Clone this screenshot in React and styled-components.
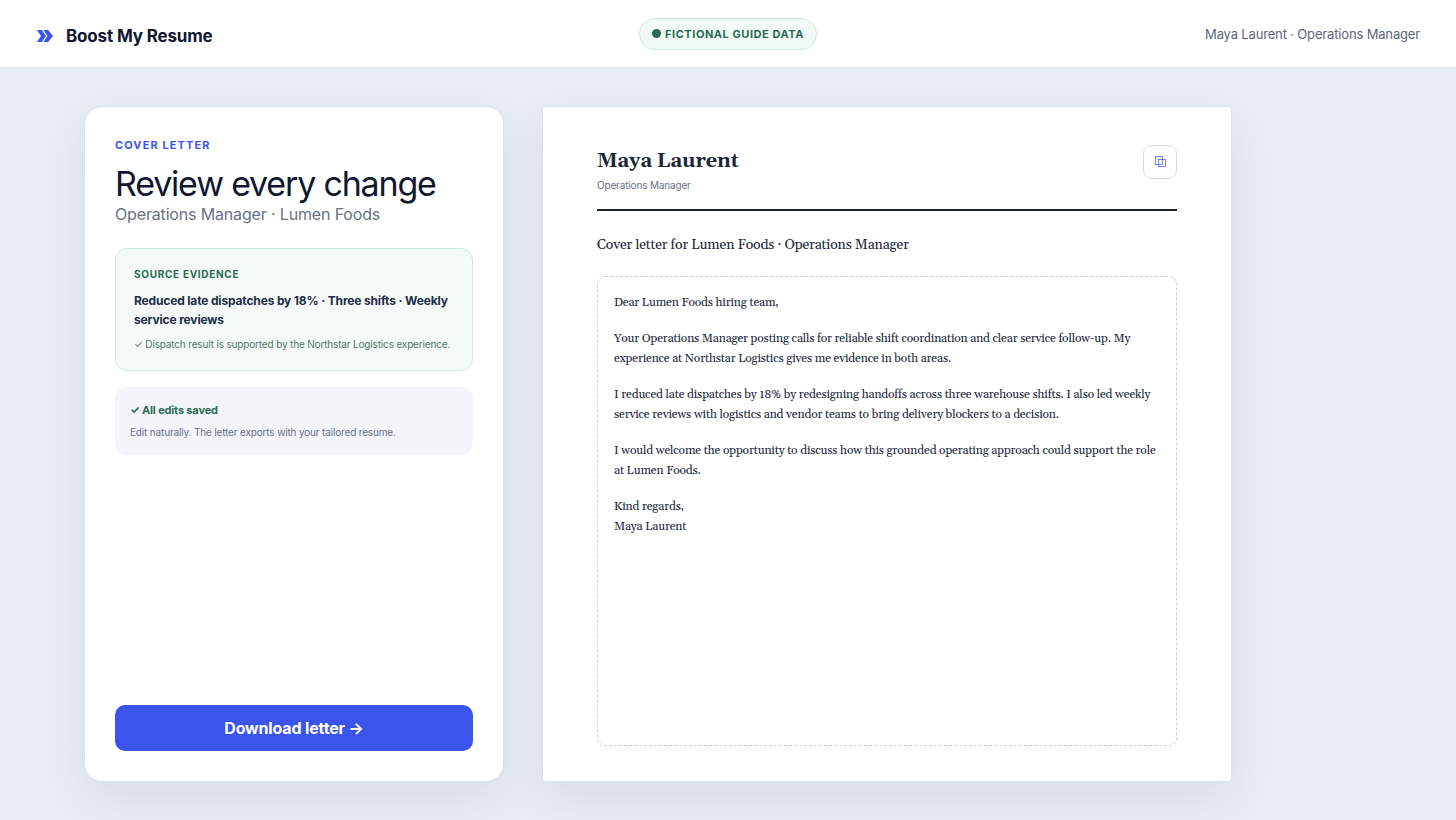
import { useState } from "react";
import styled, { createGlobalStyle } from "styled-components";

const candidate = {
  name: "Maya Laurent",
  role: "Operations Manager",
  company: "Lumen Foods",
};

const letter = [
  "Dear Lumen Foods hiring team,",
  "Your Operations Manager posting calls for reliable shift coordination and clear service follow-up. My experience at Northstar Logistics gives me evidence in both areas.",
  "I reduced late dispatches by 18% by redesigning handoffs across three warehouse shifts. I also led weekly service reviews with logistics and vendor teams to bring delivery blockers to a decision.",
  "I would welcome the opportunity to discuss how this grounded operating approach could support the role at Lumen Foods.",
  "Kind regards,\nMaya Laurent",
];

const Logo = () => (
  <svg width="18" height="12" viewBox="0 0 18 12" fill="#3b55ec" aria-hidden="true">
    <path d="M0.8 0H5.8L10 6L5.8 12H0.8L5 6Z" />
    <path d="M7.4 0H12.2L17 6L12.2 12H7.4L11.4 6Z" />
  </svg>
);

const CopyIcon = () => (
  <svg width="12" height="12" viewBox="0 0 12 12" fill="none" stroke="#3b55ec" strokeWidth="0.7" aria-hidden="true">
    <rect x="1.5" y="0.5" width="7" height="8" />
    <rect x="4.5" y="3.5" width="7" height="7" />
  </svg>
);

const App = () => {
  const [saved, setSaved] = useState(true);

  const copyLetter = () => {
    navigator.clipboard?.writeText(letter.join("\n\n"));
  };

  return (
    <Page>
      <GlobalStyle />
      <Header>
        <Brand href="#">
          <Logo />
          Boost My Resume
        </Brand>
        <Badge>
          <Dot />
          Fictional guide data
        </Badge>
        <Account>
          {candidate.name} · {candidate.role}
        </Account>
      </Header>
      <Main>
        <Panel>
          <Eyebrow>Cover letter</Eyebrow>
          <Title>Review every change</Title>
          <Subtitle>
            {candidate.role} · {candidate.company}
          </Subtitle>
          <Evidence>
            <EvidenceLabel>Source evidence</EvidenceLabel>
            <EvidenceText>
              Reduced late dispatches by 18% · Three shifts · Weekly service reviews
            </EvidenceText>
            <EvidenceNote>
              ✓ Dispatch result is supported by the Northstar Logistics experience.
            </EvidenceNote>
          </Evidence>
          <Status>
            <StatusTitle>{saved ? "✓ All edits saved" : "Saving edits"}</StatusTitle>
            <StatusNote>Edit naturally. The letter exports with your tailored resume.</StatusNote>
          </Status>
          <DownloadButton type="button">Download letter →</DownloadButton>
        </Panel>
        <Sheet>
          <SheetHeader>
            <div>
              <Name>{candidate.name}</Name>
              <Role>{candidate.role}</Role>
            </div>
            <CopyButton type="button" aria-label="Copy letter" onClick={copyLetter}>
              <CopyIcon />
            </CopyButton>
          </SheetHeader>
          <Subject id="subject">
            Cover letter for {candidate.company} · {candidate.role}
          </Subject>
          <Editor
            role="textbox"
            aria-multiline="true"
            aria-labelledby="subject"
            contentEditable
            suppressContentEditableWarning
            spellCheck={false}
            onInput={() => setSaved(false)}
            onBlur={() => setSaved(true)}
          >
            {letter.map((text) => (
              <Paragraph key={text}>{text}</Paragraph>
            ))}
          </Editor>
        </Sheet>
      </Main>
    </Page>
  );
};

const GlobalStyle = createGlobalStyle`
  * {
    box-sizing: border-box;
  }
  body {
    margin: 0;
    background: #e8ecf5;
    color: #10172f;
    font-family: Inter, "Liberation Sans", sans-serif;
    letter-spacing: -0.01em;
  }
  h1, h2, p {
    margin: 0;
  }
`;
const Page = styled.div`
  display: flex;
  flex-direction: column;
  min-height: 100vh;
`;
const Header = styled.header`
  display: grid;
  grid-template-columns: 1fr auto 1fr;
  align-items: center;
  height: 68px;
  padding: 0 36px;
  background: white;
  border-bottom: 1px solid #dfe3ec;
`;
const Brand = styled.a`
  display: flex;
  align-items: center;
  gap: 12px;
  padding-top: 4px;
  color: #10172f;
  font-size: 17px;
  font-weight: 700;
  text-decoration: none;
`;
const Badge = styled.span`
  display: flex;
  align-items: center;
  gap: 4px;
  height: 32px;
  padding: 0 12px;
  border: 1px solid #cfe9df;
  border-radius: 16px;
  background: #f1faf7;
  color: #2c6b52;
  font-size: 11px;
  font-weight: 700;
  letter-spacing: 0.05em;
  text-transform: uppercase;
`;
const Dot = styled.i`
  width: 9px;
  height: 9px;
  border-radius: 50%;
  background: #2c6b52;
`;
const Account = styled.span`
  justify-self: end;
  color: #5d667b;
  font-size: 13px;
`;
const Main = styled.main`
  flex: 1;
  display: grid;
  grid-template-columns: 420px minmax(0, 690px);
  gap: 38px;
  padding: 38px 84px;
`;
const Panel = styled.section`
  display: flex;
  flex-direction: column;
  padding: 30px;
  background: white;
  border: 1px solid #dde1eb;
  border-radius: 18px;
  box-shadow: 0 18px 48px rgba(24, 35, 50, 0.08);
`;
const Eyebrow = styled.p`
  color: #3b55ec;
  font-size: 11px;
  font-weight: 700;
  line-height: 16px;
  letter-spacing: 0.1em;
  text-transform: uppercase;
`;
const Title = styled.h1`
  margin-top: 13px;
  font-size: 34px;
  font-weight: 400;
  line-height: 36px;
  letter-spacing: -0.035em;
`;
const Subtitle = styled.p`
  color: #697186;
  font-size: 16px;
  line-height: 24px;
`;
const Evidence = styled.div`
  margin-top: 22px;
  padding: 18px;
  background: #f3faf8;
  border: 1px solid #cfe9df;
  border-radius: 12px;
`;
const EvidenceLabel = styled.p`
  color: #2c6b52;
  font-size: 10px;
  font-weight: 700;
  line-height: 14px;
  letter-spacing: 0.07em;
  text-transform: uppercase;
`;
const EvidenceText = styled.p`
  margin-top: 10px;
  color: #202b46;
  font-size: 12px;
  font-weight: 700;
  line-height: 19px;
`;
const EvidenceNote = styled.p`
  margin-top: 8px;
  color: #587468;
  font-size: 10px;
  line-height: 15px;
`;
const Status = styled.div`
  margin-top: 16px;
  padding: 15px;
  background: #f3f5fa;
  border-radius: 12px;
`;
const StatusTitle = styled.p`
  color: #2c6b52;
  font-size: 11px;
  font-weight: 700;
  line-height: 16px;
`;
const StatusNote = styled.p`
  margin-top: 6px;
  color: #697186;
  font-size: 10px;
  line-height: 16px;
`;
const DownloadButton = styled.button`
  height: 46px;
  margin-top: auto;
  border: none;
  border-radius: 10px;
  background: #3b55ec;
  color: white;
  font: 700 16px Inter, sans-serif;
  letter-spacing: inherit;
  cursor: pointer;
`;
const Sheet = styled.article`
  display: flex;
  flex-direction: column;
  padding: 38px 54px 35px;
  background: white;
  border: 1px solid #dde1eb;
  border-radius: 4px;
  box-shadow: 0 18px 48px rgba(24, 35, 50, 0.08);
  color: #202638;
  font-family: Georgia, Gelasio, "Liberation Serif", serif;
`;
const SheetHeader = styled.div`
  display: flex;
  justify-content: space-between;
  align-items: flex-start;
  padding-bottom: 16px;
  border-bottom: 2px solid #1b2236;
`;
const Name = styled.h2`
  font-size: 20px;
  font-weight: 700;
  line-height: 32px;
`;
const Role = styled.p`
  color: #697186;
  font-family: Inter, sans-serif;
  font-size: 10px;
  line-height: 16px;
`;
const CopyButton = styled.button`
  display: grid;
  place-items: center;
  width: 34px;
  height: 34px;
  padding: 0;
  border: 1px solid #d5daea;
  border-radius: 9px;
  background: white;
  cursor: pointer;
`;
const Subject = styled.p`
  margin-top: 24px;
  font-size: 14px;
  line-height: 20px;
`;
const Editor = styled.div`
  flex: 1;
  margin-top: 21px;
  padding: 16px;
  border: 1px dashed #c9ced6;
  border-radius: 8px;
  font-size: 12px;
  line-height: 20px;
  white-space: pre-line;
  outline: none;
`;
const Paragraph = styled.p`
  & + & {
    margin-top: 16px;
  }
`;

export default App;
